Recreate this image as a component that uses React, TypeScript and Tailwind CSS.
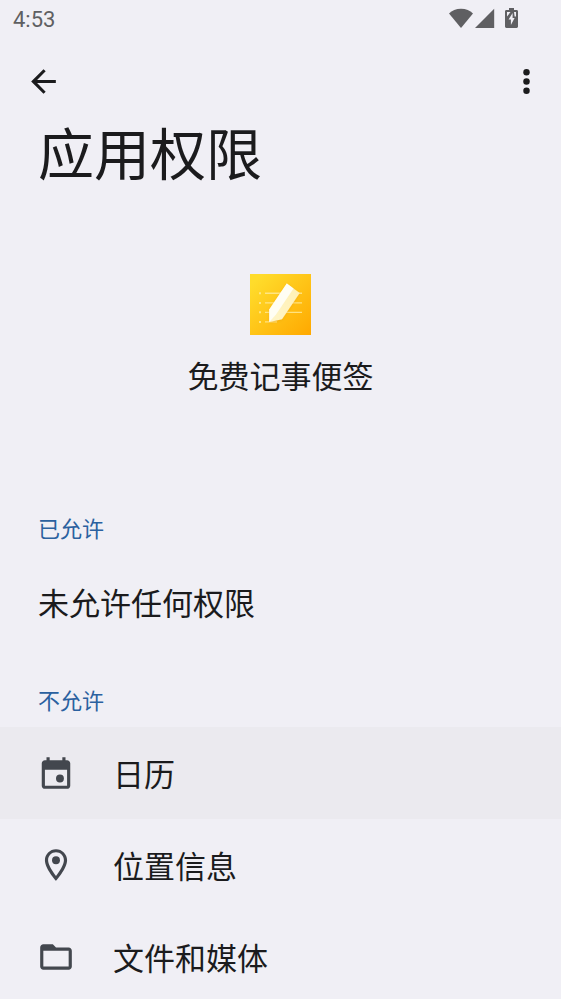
import type { ReactNode } from "react"

function WifiIcon() {
  return (
    <svg className="h-5 w-6" viewBox="0 0 24 20" fill="currentColor" aria-hidden="true">
      <path d="M12 20 L0 5.6 C3 2.6 7 0.8 12 0.8 S21 2.6 24 5.6 Z" />
    </svg>
  )
}

function SignalIcon() {
  return (
    <svg className="h-5 w-5" viewBox="0 0 20 20" fill="currentColor" aria-hidden="true">
      <path d="M0 20 L19.2 0.8 V20 Z" />
    </svg>
  )
}

function BatteryIcon() {
  return (
    <svg className="h-5 w-[13px]" viewBox="0 0 13 20" aria-hidden="true">
      <path fill="currentColor" d="M4 0h5v2h2.6c.8 0 1.4.6 1.4 1.4v15.2c0 .8-.6 1.4-1.4 1.4H1.4C.6 20 0 19.4 0 18.6V3.4C0 2.6.6 2 1.4 2H4z" />
      <path fill="#f0eff5" d="M2 4h3.5L2 8.5zM9 4h2v4.5H9.6z" />
      <path fill="#f0eff5" d="M7.6 5L3.6 11.5h2.3V17l3.7-7H7.6z" />
    </svg>
  )
}

function AppLogo() {
  return (
    <svg className="h-[61px] w-[61px]" viewBox="0 0 61 61" aria-hidden="true">
      <defs>
        <linearGradient id="logo-bg" x1="0" y1="0" x2="1" y2="1">
          <stop offset="0.1" stopColor="#ffdc2b" />
          <stop offset="1" stopColor="#ffa800" />
        </linearGradient>
        <linearGradient id="pencil-side" x1="1" y1="0" x2="0" y2="1">
          <stop offset="0" stopColor="#fff0b4" />
          <stop offset="1" stopColor="#fff5c8" />
        </linearGradient>
        <filter id="pencil-shadow" x="-30%" y="-30%" width="160%" height="160%">
          <feDropShadow dx="0" dy="1" stdDeviation="1.5" floodColor="#e89a00" floodOpacity="0.4" />
        </filter>
      </defs>
      <rect width="61" height="61" fill="url(#logo-bg)" />
      <g fill="#ffea94" opacity="0.85">
        <path d="M9 18.3h2v2H9zM9 28h2v2H9zM9 37.3h2v2H9zM9 47h2v2H9z" />
        <path d="M15 18.6h37V20H15zM15 28.2h37v1.4H15zM15 37.7h37v1.4H15zM15 47.2h12v1.4H15z" />
      </g>
      <g filter="url(#pencil-shadow)">
        <path fill="url(#pencil-side)" d="M36.8 9.6L49.7 19L32 45.2L19.3 48V35.5z" />
        <path fill="#fffef4" d="M36.8 9.6L43.5 14.4L26 40.5L19.3 48V35.5z" />
      </g>
    </svg>
  )
}

function CalendarIcon() {
  return (
    <svg className="h-[38px] w-[38px]" viewBox="0 0 24 24" fill="currentColor" aria-hidden="true">
      <path d="M19 4h-1V2h-2v2H8V2H6v2H5c-1.11 0-2 .9-2 2v14c0 1.1.89 2 2 2h14c1.1 0 2-.9 2-2V6c0-1.1-.9-2-2-2zm0 16H5V10h14v10z" />
      <circle cx="14.5" cy="15.5" r="2.5" />
    </svg>
  )
}

function PinIcon() {
  return (
    <svg className="h-[38px] w-[38px]" viewBox="0 0 24 24" fill="currentColor" aria-hidden="true">
      <path d="M12 2C8.13 2 5 5.13 5 9c0 5.25 7 13 7 13s7-7.75 7-13c0-3.87-3.13-7-7-7zM7 9c0-2.76 2.24-5 5-5s5 2.24 5 5c0 2.88-2.88 7.19-5 9.88C9.92 16.21 7 11.85 7 9z" />
      <circle cx="12" cy="9" r="2.5" />
    </svg>
  )
}

function FolderIcon() {
  return (
    <svg className="h-[38px] w-[38px]" viewBox="0 0 24 24" fill="currentColor" aria-hidden="true">
      <path d="M20 6h-8l-2-2H4c-1.1 0-1.99.9-1.99 2L2 18c0 1.1.9 2 2 2h16c1.1 0 2-.9 2-2V8c0-1.1-.9-2-2-2zm0 12H4V8h16v10z" />
    </svg>
  )
}

type Permission = { name: string; icon: ReactNode; pressed?: boolean }

const denied: Permission[] = [
  { name: "日历", icon: <CalendarIcon />, pressed: true },
  { name: "位置信息", icon: <PinIcon /> },
  { name: "文件和媒体", icon: <FolderIcon /> },
]

export default function App() {
  return (
    <div className="h-screen overflow-hidden bg-[#f0eff5] text-[#1b1b1d] font-['Noto_Sans_CJK_SC',sans-serif]">
      <div className="flex h-[38px] items-start justify-between pl-[13px] pr-[43px] text-[#5f5f62]">
        <span className="font-[Roboto,sans-serif] text-[22px] leading-[40px]">4:53</span>
        <div className="flex items-center pt-2">
          <WifiIcon />
          <span className="ml-0.5"><SignalIcon /></span>
          <span className="ml-2.5"><BatteryIcon /></span>
        </div>
      </div>

      <header>
        <div className="flex h-[86px] items-center justify-between pl-[25px] pr-4">
          <button aria-label="返回">
            <svg className="h-[37px] w-[37px]" viewBox="0 0 24 24" fill="currentColor">
              <path d="M20 11H7.83l5.59-5.59L12 4l-8 8 8 8 1.41-1.41L7.83 13H20v-2z" />
            </svg>
          </button>
          <button aria-label="更多选项">
            <svg className="h-[37px] w-[37px]" viewBox="0 0 24 24" fill="currentColor">
              <circle cx="12" cy="6" r="2.1" />
              <circle cx="12" cy="12" r="2.1" />
              <circle cx="12" cy="18" r="2.1" />
            </svg>
          </button>
        </div>
        <h1 className="px-[38px] text-[56px] leading-[54px]">应用权限</h1>
      </header>

      <main>
        <div className="flex flex-col items-center pt-24">
          <AppLogo />
          <p className="mt-[18px] text-[31px] leading-[44px]">免费记事便签</p>
        </div>

        <section className="pt-[114px]">
          <h2 className="px-[38px] pb-0.5 text-[22px] leading-8 text-[#2b619f]">已允许</h2>
          <p className="px-[38px] text-[31px] leading-[114px]">未允许任何权限</p>
        </section>

        <section className="pt-6">
          <h2 className="px-[38px] pb-3 text-[22px] leading-8 text-[#2b619f]">不允许</h2>
          <ul>
            {denied.map(p => (
              <li key={p.name}>
                <button className={`flex h-[92px] w-full items-center gap-[38px] px-[37px] text-left text-[31px] ${p.pressed ? "bg-[#ebeaef]" : ""}`}>
                  <span className="text-[#43474e]">{p.icon}</span>
                  <span>{p.name}</span>
                </button>
              </li>
            ))}
          </ul>
        </section>
      </main>
    </div>
  )
}
